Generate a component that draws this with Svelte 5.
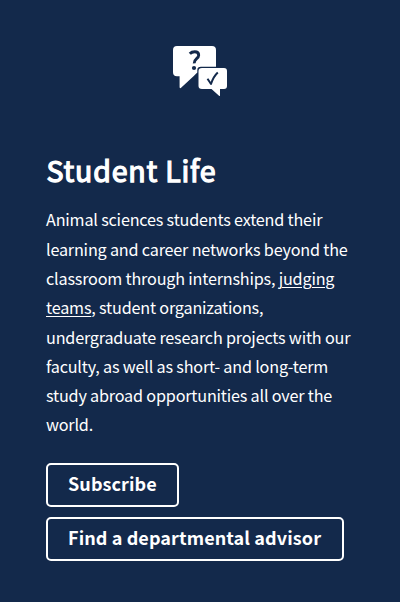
<script>
  const actions = ['Subscribe', 'Find a departmental advisor'];
</script>

<section class="card">
  <svg class="icon" width="54" height="51" viewBox="0 0 54 51" aria-hidden="true">
    <path fill="#fff" d="M4 0H39Q43 0 43 4V20.700H28Q24.300 20.700 24.300 24V26.500L20.500 30.200L7.800 42Q6.500 42.500 6.600 41V30.200H4Q0 30.200 0 26.200V4Q0 0 4 0Z" />
    <path fill="#fff" d="M29 22H51Q54 22 54 25V40Q54 43 51 43H47V49.500Q46.800 50.500 46 49.700L38.500 43H29Q25.500 43 25.500 40V25Q25.500 22 29 22Z" />
    <path fill="none" stroke="#13294b" stroke-width="2.900" d="M16.800 7.700C18.200 6.200 19.800 5.700 21.800 5.700C24.300 5.700 25.700 7.100 25.700 9.200C25.700 12.700 20.800 12.800 21.200 17.400" />
    <circle cx="21" cy="22" r="2.100" fill="#13294b" />
    <path fill="none" stroke="#13294b" stroke-width="2" stroke-linejoin="round" d="M34.500 32.800L38 38Q40.500 30.500 44.800 26.600" />
  </svg>
  <h2>Student Life</h2>
  <p>
    Animal sciences students extend their<br />
    learning and career networks beyond the<br />
    classroom through internships, <a href="#judging">judging<br />
    teams</a>, student organizations,<br />
    undergraduate research projects with our<br />
    faculty, as well as short- and long-term<br />
    study abroad opportunities all over the<br />
    world.
  </p>
  <div class="actions">
    {#each actions as label}
      <button type="button">{label}</button>
    {/each}
  </div>
</section>

<style>
  :global(body) {
    background: #13294b;
  }
  .card {
    box-sizing: border-box;
    height: 602px;
    padding: 46px 0 0 46px;
    background: #13294b;
    color: #fff;
    font-family: 'Noto Sans CJK SC', 'Noto Sans', sans-serif;
  }
  .icon {
    display: block;
    margin-left: 127px;
  }
  h2 {
    margin: 53px 0 0;
    padding-left: 0.5px;
    font-size: 28.5px;
    font-weight: 400;
    -webkit-text-stroke: 1.25px #fff;
    letter-spacing: 0.8px;
    line-height: 40px;
    white-space: nowrap;
  }
  p {
    margin: 15.4px 0 0;
    font-size: 16.2px;
    letter-spacing: -0.19px;
    line-height: 29.300px;
    white-space: nowrap;
  }
  a {
    color: inherit;
    text-decoration: underline;
    text-decoration-thickness: 1px;
    text-underline-offset: 2px;
  }
  .actions {
    display: flex;
    flex-direction: column;
    align-items: flex-start;
    gap: 10px;
    margin-top: 23.6px;
  }
  button {
    box-sizing: border-box;
    height: 44px;
    padding: 0 20.500px 4px 20px;
    border: 2px solid #fff;
    border-radius: 5px;
    background: none;
    color: #fff;
    font: 700 18px/36px 'Noto Sans CJK SC', 'Noto Sans', sans-serif;
    letter-spacing: 0.1px;
    white-space: nowrap;
  }
</style>
